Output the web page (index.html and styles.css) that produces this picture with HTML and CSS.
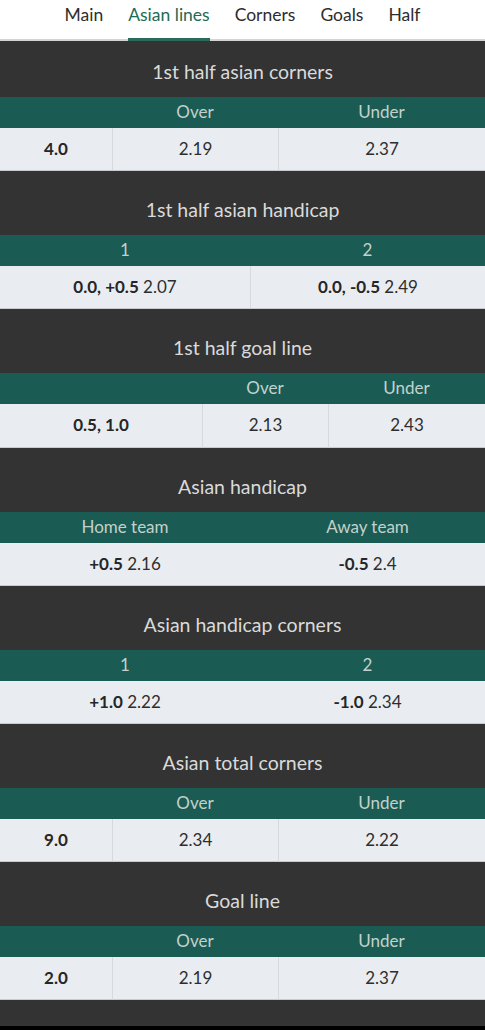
FILE: index.html
```html
<!DOCTYPE html>
<html lang="en">
<head>
<meta charset="utf-8">
<title>Asian lines</title>
<link rel="stylesheet" href="styles.css">
</head>
<body>
<nav class="tabs">
  <a class="tab">Main</a>
  <a class="tab active">Asian lines</a>
  <a class="tab">Corners</a>
  <a class="tab">Goals</a>
  <a class="tab">Half</a>
</nav>
<main class="markets">
  <section class="market">
    <h2 class="market-title">1st half asian corners</h2>
    <div class="odds odds-line">
      <div class="head"></div><div class="head">Over</div><div class="head">Under</div>
      <div class="cell bold">4.0</div><div class="cell sep">2.19</div><div class="cell sep">2.37</div>
    </div>
  </section>
  <section class="market">
    <h2 class="market-title">1st half asian handicap</h2>
    <div class="odds odds-two">
      <div class="head">1</div><div class="head">2</div>
      <div class="cell"><b>0.0, +0.5</b> 2.07</div><div class="cell sep"><b>0.0, -0.5</b> 2.49</div>
    </div>
  </section>
  <section class="market">
    <h2 class="market-title">1st half goal line</h2>
    <div class="odds odds-goal">
      <div class="head"></div><div class="head">Over</div><div class="head">Under</div>
      <div class="cell bold">0.5, 1.0</div><div class="cell sep">2.13</div><div class="cell sep">2.43</div>
    </div>
  </section>
  <section class="market">
    <h2 class="market-title">Asian handicap</h2>
    <div class="odds odds-two">
      <div class="head">Home team</div><div class="head">Away team</div>
      <div class="cell"><b>+0.5</b> 2.16</div><div class="cell"><b>-0.5</b> 2.4</div>
    </div>
  </section>
  <section class="market">
    <h2 class="market-title">Asian handicap corners</h2>
    <div class="odds odds-two">
      <div class="head">1</div><div class="head">2</div>
      <div class="cell"><b>+1.0</b> 2.22</div><div class="cell"><b>-1.0</b> 2.34</div>
    </div>
  </section>
  <section class="market">
    <h2 class="market-title">Asian total corners</h2>
    <div class="odds odds-line">
      <div class="head"></div><div class="head">Over</div><div class="head">Under</div>
      <div class="cell bold">9.0</div><div class="cell sep">2.34</div><div class="cell sep">2.22</div>
    </div>
  </section>
  <section class="market">
    <h2 class="market-title">Goal line</h2>
    <div class="odds odds-line">
      <div class="head"></div><div class="head">Over</div><div class="head">Under</div>
      <div class="cell bold">2.0</div><div class="cell sep">2.19</div><div class="cell sep">2.37</div>
    </div>
  </section>
</main>
<footer class="bottom-bar"></footer>
</body>
</html>
```
FILE: styles.css
```css
* { box-sizing: border-box; }
html, body { margin: 0; padding: 0; }
body {
  background: #000;
  font-family: Lato, "Open Sans", "Liberation Sans", sans-serif;
  color: #2b2b2b;
  width: 485px;
}
.tabs {
  background: #fff;
  height: 41px;
  display: flex;
  justify-content: center;
  gap: 25px;
  box-shadow: inset 0 -2px 0 #d4d4d4;
}
.tab {
  font-size: 17.5px;
  line-height: 30px;
  height: 41px;
  color: #2d2d2d;
  border-bottom: 3px solid transparent;
}
.tab.active {
  color: #1c6b55;
  border-bottom-color: #2a6b5a;
}
.markets {
  background: #333333;
  padding-bottom: 18px;
}
.market { padding-bottom: 8px; }
.market-title {
  margin: 0;
  height: 56px;
  padding-top: 18px;
  font-size: 19.5px;
  font-weight: 400;
  line-height: 26px;
  text-align: center;
  color: #dadada;
}
.odds {
  display: grid;
}
.odds-line { grid-template-columns: 112px 166px 1fr; }
.odds-two { grid-template-columns: 250px 1fr; }
.odds-goal { grid-template-columns: 202px 126px 1fr; }
.head {
  background: #1a5c53;
  height: 31px;
  line-height: 30px;
  text-align: center;
  font-size: 17px;
  color: #c3d1cd;
}
.cell {
  background: #e9edf1;
  height: 43.2px;
  line-height: 42px;
  text-align: center;
  font-size: 17px;
  color: #2e2e2e;
  border-bottom: 1px solid #c7cbcf;
}
.cell.sep { border-left: 1px solid #d6dadd; }
.cell.bold, .cell b { font-weight: 700; color: #262626; }
.bottom-bar { height: 10px; background: #000; }
```
